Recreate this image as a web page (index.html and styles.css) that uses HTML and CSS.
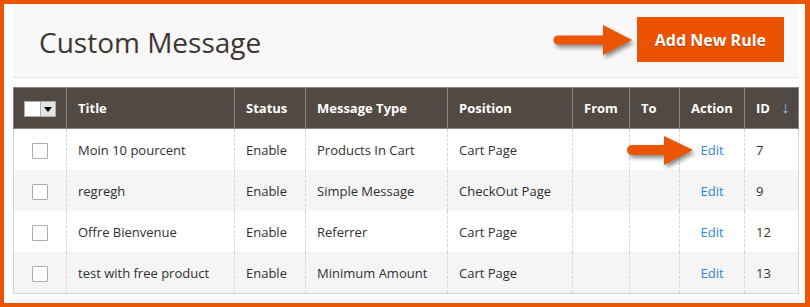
FILE: index.html
```html
<!DOCTYPE html>
<html lang="en">
<head>
    <meta charset="UTF-8">
    <title>Custom Message</title>
    <link rel="stylesheet" href="styles.css">
</head>
<body>
    <div class="shot">
        <div class="frame">
            <div class="page-header">
                <h1 class="page-title">Custom Message</h1>
                <button class="btn-primary">Add New Rule</button>
            </div>
            <table class="grid">
                <colgroup>
                    <col style="width: 53px">
                    <col style="width: 168px">
                    <col style="width: 71px">
                    <col style="width: 142px">
                    <col style="width: 125px">
                    <col style="width: 57px">
                    <col style="width: 50px">
                    <col style="width: 65px">
                    <col style="width: 54px">
                </colgroup>
                <thead>
                    <tr>
                        <th class="col-check">
                            <span class="mass-select"><span class="mass-box"></span><span class="mass-toggle"></span></span>
                        </th>
                        <th>Title</th>
                        <th>Status</th>
                        <th>Message Type</th>
                        <th>Position</th>
                        <th>From</th>
                        <th>To</th>
                        <th>Action</th>
                        <th>ID <span class="sort-arrow">&#8595;</span></th>
                    </tr>
                </thead>
                <tbody>
                    <tr>
                        <td class="col-check"><span class="checkbox"></span></td>
                        <td>Moin 10 pourcent</td>
                        <td>Enable</td>
                        <td>Products In Cart</td>
                        <td>Cart Page</td>
                        <td></td>
                        <td></td>
                        <td class="col-action"><a href="#">Edit</a></td>
                        <td>7</td>
                    </tr>
                    <tr>
                        <td class="col-check"><span class="checkbox"></span></td>
                        <td>regregh</td>
                        <td>Enable</td>
                        <td>Simple Message</td>
                        <td>CheckOut Page</td>
                        <td></td>
                        <td></td>
                        <td class="col-action"><a href="#">Edit</a></td>
                        <td>9</td>
                    </tr>
                    <tr>
                        <td class="col-check"><span class="checkbox"></span></td>
                        <td>Offre Bienvenue</td>
                        <td>Enable</td>
                        <td>Referrer</td>
                        <td>Cart Page</td>
                        <td></td>
                        <td></td>
                        <td class="col-action"><a href="#">Edit</a></td>
                        <td>12</td>
                    </tr>
                    <tr>
                        <td class="col-check"><span class="checkbox"></span></td>
                        <td>test with free product</td>
                        <td>Enable</td>
                        <td>Minimum Amount</td>
                        <td>Cart Page</td>
                        <td></td>
                        <td></td>
                        <td class="col-action"><a href="#">Edit</a></td>
                        <td>13</td>
                    </tr>
                </tbody>
            </table>
        </div>

        <!-- callout arrows drawn over the screenshot -->
        <svg class="callout callout-button" width="92" height="42" viewBox="0 0 92 42">
            <path d="M10 15.5 H55 V5 L84 20 L55 35 V24.5 H10 A4.5 4.5 0 0 1 10 15.5 Z"/>
        </svg>
        <svg class="callout callout-edit" width="82" height="42" viewBox="0 0 82 42">
            <path d="M12 15 H44 V6 L73 20 L44 35 V25 H12 A5 5 0 0 1 12 15 Z"/>
        </svg>
    </div>
</body>
</html>
```

FILE: styles.css
```css
:root {
    --orange: #eb5202;
    --frame-orange: #e95504;
    --grid-head: #514943;
    --grid-head-border: #8a837f;
    --grid-border: #d6d6d6;
    --text-color: #303030;
    --link-color: #2f86d6;
}
body {
    margin: 0;
    padding: 0;
    font-family: 'Open Sans', 'Liberation Sans', sans-serif;
    color: var(--text-color);
}
.shot {
    position: relative;
    width: 810px;
    height: 307px;
    box-sizing: border-box;
    background-color: var(--frame-orange);
    padding: 4px 5px 4px 4px;
}
.frame {
    height: 100%;
    box-sizing: border-box;
    background-color: #ffffff;
    padding: 0 7px 6px 9px;
}
.page-header {
    display: flex;
    align-items: center;
    justify-content: space-between;
    height: 73px;
    background-color: #f8f8f8;
    border-bottom: 1px solid #e3e3e3;
    padding: 0 14px 0 26px;
}
.page-title {
    margin: 3px 0 0;
    font-size: 28px;
    font-weight: 400;
    color: #41362f;
}
.btn-primary {
    height: 45px;
    margin-top: -2px;
    padding: 0 18px;
    border: none;
    background-color: var(--orange);
    color: #ffffff;
    font-family: inherit;
    font-size: 16px;
    font-weight: 700;
    text-shadow: 0 1px 1px rgba(0, 0, 0, 0.25);
}
.grid {
    width: 100%;
    margin-top: 9px;
    border-collapse: collapse;
    table-layout: fixed;
    border: 1px solid var(--grid-border);
    font-size: 13px;
}
.grid th {
    height: 40px;
    padding: 0 11px;
    background-color: var(--grid-head);
    border: 1px solid var(--grid-head-border);
    color: #ffffff;
    font-weight: 700;
    text-align: left;
    white-space: nowrap;
}
.grid td {
    height: 41px;
    padding: 0 11px;
    border-left: 1px dashed var(--grid-border);
    border-right: 1px dashed var(--grid-border);
    white-space: nowrap;
}
.grid tbody tr:nth-child(even) td {
    background-color: #f5f5f5;
}
.grid .col-check {
    padding: 0;
    text-align: center;
}
.grid .col-action {
    padding: 0;
    text-align: center;
}
.grid .col-action a {
    color: var(--link-color);
    text-decoration: none;
}
.sort-arrow {
    margin-left: 8px;
    font-size: 16px;
    font-weight: 400;
    line-height: 1;
    color: #8fc3ee;
}
.checkbox {
    display: inline-block;
    width: 14px;
    height: 14px;
    border: 1px solid #adadad;
    border-radius: 1px;
    background-color: #ffffff;
    vertical-align: middle;
}
.mass-select {
    display: inline-flex;
    height: 16px;
    border: 1px solid #adadad;
    box-sizing: border-box;
    vertical-align: middle;
}
.mass-box {
    width: 15px;
    background-color: #ffffff;
}
.mass-toggle {
    position: relative;
    width: 14px;
    background-color: #e3e3e3;
    border-left: 1px solid #adadad;
}
.mass-toggle::after {
    content: '';
    position: absolute;
    left: 3px;
    top: 5px;
    border-left: 4px solid transparent;
    border-right: 4px solid transparent;
    border-top: 5px solid #000000;
}
.callout {
    position: absolute;
    overflow: visible;
    fill: #ea5504;
    filter: drop-shadow(2px 3px 2px rgba(0, 0, 0, 0.45));
}
.callout-button {
    left: 548px;
    top: 20px;
}
.callout-edit {
    left: 620px;
    top: 130px;
}
```
